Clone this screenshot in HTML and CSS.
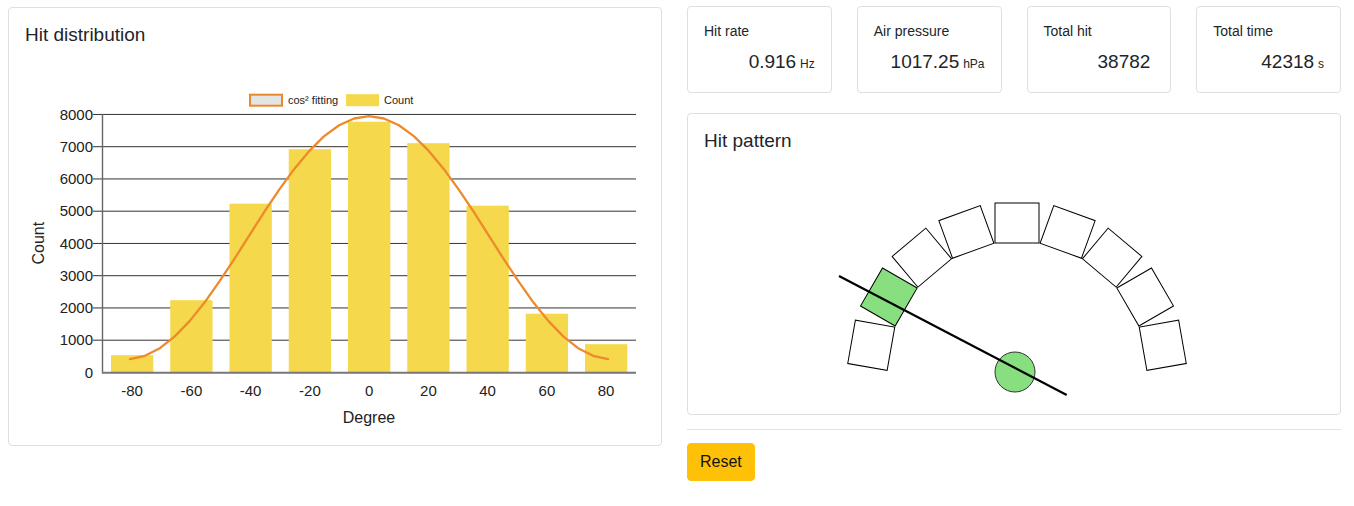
FILE: index.html
```html
<!DOCTYPE html>
<html lang="en">
<head>
<meta charset="utf-8">
<title>Hit monitor</title>
<link rel="stylesheet" href="styles.css">
</head>
<body>
<div class="page">
  <section class="card dist">
    <h5 class="card-title">Hit distribution</h5>
    <svg class="chart" width="620" height="382" viewBox="0 0 620 382" xmlns="http://www.w3.org/2000/svg">
      <g transform="translate(-25 -46.8)">
        <!-- legend -->
        <rect x="250" y="94.5" width="32" height="11" fill="#e4e4e4" stroke="#e8892b" stroke-width="2"/>
        <text class="legend" x="288" y="104">cos² fitting</text>
        <rect x="346" y="94" width="33" height="12" fill="#f5d84b"/>
        <text class="legend" x="384" y="104">Count</text>

        <!-- grid -->
        <g stroke="#333" stroke-width="1">
          <line x1="93" y1="114.25" x2="636" y2="114.25"/>
          <line x1="93" y1="146.5" x2="636" y2="146.5"/>
          <line x1="93" y1="178.75" x2="636" y2="178.75"/>
          <line x1="93" y1="211" x2="636" y2="211"/>
          <line x1="93" y1="243.25" x2="636" y2="243.25"/>
          <line x1="93" y1="275.5" x2="636" y2="275.5"/>
          <line x1="93" y1="307.75" x2="636" y2="307.75"/>
          <line x1="93" y1="340" x2="636" y2="340"/>
        </g>

        <!-- y labels -->
        <g class="tick" text-anchor="end">
          <text x="93" y="119.5">8000</text>
          <text x="93" y="151.8">7000</text>
          <text x="93" y="184">6000</text>
          <text x="93" y="216.3">5000</text>
          <text x="93" y="248.5">4000</text>
          <text x="93" y="280.8">3000</text>
          <text x="93" y="313">2000</text>
          <text x="93" y="345.3">1000</text>
          <text x="93" y="377.5">0</text>
        </g>
        <text class="axis-title" transform="translate(44 243) rotate(-90)" text-anchor="middle">Count</text>

        <!-- bars -->
        <g fill="#f5d84b">
          <rect x="111" y="355" width="42.3" height="17.25"/>
          <rect x="170.25" y="300" width="42.3" height="72.25"/>
          <rect x="229.5" y="203.5" width="42.3" height="168.75"/>
          <rect x="288.75" y="149" width="42.3" height="223.25"/>
          <rect x="348" y="121.5" width="42.3" height="250.75"/>
          <rect x="407.25" y="143" width="42.3" height="229.25"/>
          <rect x="466.5" y="205.5" width="42.3" height="166.75"/>
          <rect x="525.75" y="313.5" width="42.3" height="58.75"/>
          <rect x="585" y="344" width="42.3" height="28.25"/>
        </g>

        <!-- axes -->
        <line x1="102.5" y1="114" x2="102.5" y2="373" stroke="#666" stroke-width="1.4"/>
        <line x1="102" y1="372.5" x2="636" y2="372.5" stroke="#777" stroke-width="2"/>

        <!-- fit curve -->
        <polyline fill="none" stroke="#ec8a2c" stroke-width="2.3" stroke-linejoin="round" stroke-linecap="round"
          points="130,358.9 144.9,355.6 159.9,348 174.8,336.2 189.8,320.7 204.7,302.1 219.6,281 234.6,258.4 249.5,235 264.4,211.5 279.4,189.2 294.3,168.7 309.3,150.7 324.2,135.9 339.1,125 354.1,118.3 369,116 383.9,118.3 398.9,125 413.8,135.9 428.8,150.7 443.7,168.7 458.6,189.2 473.6,211.5 488.5,235 503.4,258.4 518.4,281 533.3,302.1 548.3,320.7 563.2,336.2 578.1,348 593.1,355.6 608,358.9"/>

        <!-- x labels -->
        <g class="tick" text-anchor="middle">
          <text x="132" y="395.5">-80</text>
          <text x="191.4" y="395.5">-60</text>
          <text x="250.6" y="395.5">-40</text>
          <text x="309.9" y="395.5">-20</text>
          <text x="369.2" y="395.5">0</text>
          <text x="428.4" y="395.5">20</text>
          <text x="487.6" y="395.5">40</text>
          <text x="546.9" y="395.5">60</text>
          <text x="606.1" y="395.5">80</text>
        </g>
        <text class="axis-title" x="369" y="422.5" text-anchor="middle">Degree</text>
      </g>
    </svg>
  </section>

  <div class="right">
    <div class="stats">
      <div class="card stat">
        <div class="stat-label">Hit rate</div>
        <div class="stat-value"><span class="num">0.916</span> <span class="unit">Hz</span></div>
      </div>
      <div class="card stat">
        <div class="stat-label">Air pressure</div>
        <div class="stat-value"><span class="num">1017.25</span> <span class="unit">hPa</span></div>
      </div>
      <div class="card stat">
        <div class="stat-label">Total hit</div>
        <div class="stat-value"><span class="num">38782</span>&nbsp;<span class="unit"></span></div>
      </div>
      <div class="card stat">
        <div class="stat-label">Total time</div>
        <div class="stat-value"><span class="num">42318</span> <span class="unit">s</span></div>
      </div>
    </div>

    <section class="card pattern">
      <h5 class="card-title">Hit pattern</h5>
      <svg class="pattern-svg" width="620" height="245" viewBox="0 0 620 245" xmlns="http://www.w3.org/2000/svg">
        <g transform="translate(-704 -152)">
          <g transform="translate(1017 370)" stroke="#000" stroke-width="1" fill="#fff">
            <rect x="-22" y="-168" width="44" height="40" transform="rotate(-80)"/>
            <rect x="-22" y="-168" width="44" height="40" transform="rotate(-60)" fill="#88df7f"/>
            <rect x="-22" y="-168" width="44" height="40" transform="rotate(-40)"/>
            <rect x="-22" y="-168" width="44" height="40" transform="rotate(-20)"/>
            <rect x="-22" y="-168" width="44" height="40"/>
            <rect x="-22" y="-168" width="44" height="40" transform="rotate(20)"/>
            <rect x="-22" y="-168" width="44" height="40" transform="rotate(40)"/>
            <rect x="-22" y="-168" width="44" height="40" transform="rotate(60)"/>
            <rect x="-22" y="-168" width="44" height="40" transform="rotate(80)"/>
          </g>
          <circle cx="1015" cy="371" r="20" fill="#88df7f" stroke="#333" stroke-width="1"/>
          <line x1="839" y1="275" x2="1066.7" y2="394" stroke="#000" stroke-width="2.2"/>
        </g>
      </svg>
    </section>

    <hr class="divider">
    <button class="btn" type="button">Reset</button>
  </div>
</div>
</body>
</html>
```

FILE: styles.css
```css
html, body {
  margin: 0;
  background: #fff;
}

body {
  font-family: "Liberation Sans", Arial, sans-serif;
  color: #212529;
}

.page {
  display: grid;
  grid-template-columns: 1fr 1fr;
  gap: 25px;
  padding: 7px 13px 0 8px;
  align-items: start;
}

.card {
  border: 1px solid #dfdfdf;
  border-radius: 4px;
  padding: 16px;
  background: #fff;
}

.card-title {
  margin: 0;
  font-size: 19px;
  font-weight: 400;
  line-height: 1.2;
}

.chart,
.pattern-svg {
  display: block;
}

.chart .legend {
  font-size: 11px;
  fill: #222;
}

.chart .tick {
  font-size: 15px;
  fill: #222;
}

.chart .axis-title {
  font-size: 16px;
  fill: #222;
}

.right {
  display: flex;
  flex-direction: column;
  align-items: stretch;
  margin-top: -1px;
}

.stats {
  display: grid;
  grid-template-columns: repeat(4, 1fr);
  gap: 25px;
  margin-bottom: 20px;
}

.stat-label {
  font-size: 14px;
  line-height: 1.2;
}

.stat-value {
  margin-top: 10px;
  text-align: right;
  font-size: 14px;
  line-height: 24.5px;
}

.stat-value .num {
  font-size: 19px;
}

.stat-value .unit {
  font-size: 12px;
}

.divider {
  border: 0;
  border-top: 1px solid #e3e3e3;
  margin: 14px 0 13px;
  width: 100%;
}

.btn {
  align-self: flex-start;
  font-family: inherit;
  font-size: 16px;
  line-height: 24px;
  padding: 6px 12px;
  background: #ffc107;
  border: 1px solid #ffc107;
  border-radius: 4px;
  color: #111;
  cursor: pointer;
}
```
